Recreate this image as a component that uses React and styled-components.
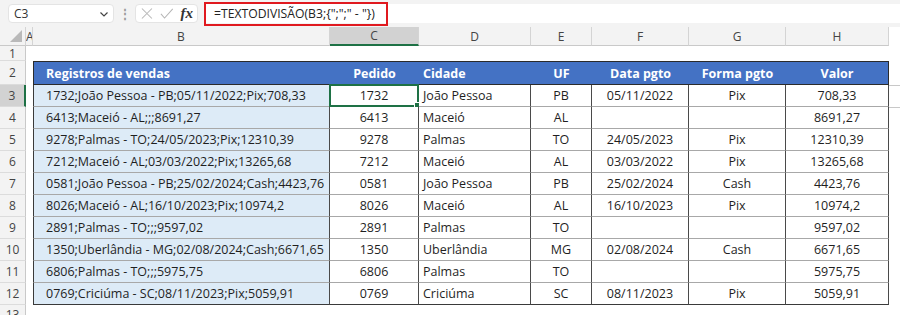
import React from 'react'
import styled, { createGlobalStyle } from 'styled-components'

const GlobalStyle = createGlobalStyle`
    body {
        margin: 0;
        background: #ffffff;
        font-family: 'Open Sans', 'Noto Sans', sans-serif;
    }
`

const COLS = '26px 7px 297px 89px 112px 61px 97px 97px 103px 1fr'

const Page = styled.div`
    width: 900px;
    height: 315px;
    overflow: hidden;
    background: #ffffff;
`

const Toolbar = styled.div`
    display: flex;
    align-items: center;
    height: 27px;
    background: #f3f3f3;
    padding-left: 8px;
`

const NameBox = styled.div`
    display: flex;
    align-items: center;
    justify-content: space-between;
    width: 106px;
    height: 19px;
    box-sizing: border-box;
    padding: 0 4px 0 5px;
    background: #ffffff;
    border: 1px solid #e4e4e4;
    border-radius: 4px;
    font-size: 12px;
    color: #333;
`

const Dots = styled.div`
    width: 21px;
    text-align: center;
    color: #9a9a9a;
    font-size: 12px;
    font-weight: 700;
`

const FnBox = styled.div`
    display: flex;
    align-items: center;
    gap: 7px;
    width: 63px;
    height: 19px;
    box-sizing: border-box;
    padding: 0 4px 0 5px;
    background: #ffffff;
    border: 1px solid #e4e4e4;
    border-radius: 4px;
`

const Fx = styled.span`
    font-family: 'Liberation Serif', serif;
    font-style: italic;
    font-weight: 700;
    font-size: 15px;
    color: #333;
`

const FormulaBar = styled.div`
    flex: 1;
    display: flex;
    align-items: center;
    height: 19px;
    margin-left: 6px;
    background: #ffffff;
`

const Formula = styled.div`
    height: 24px;
    box-sizing: border-box;
    border: 2px solid #e0191f;
    padding: 0 11px 0 8px;
    display: flex;
    align-items: center;
    font-size: 12.2px;
    color: #222;
    white-space: nowrap;
`

const Sheet = styled.div`
    display: grid;
    grid-template-columns: ${COLS};
    grid-template-rows: 19px 15px 24px repeat(10, 22px) 20px;
`

const ColHead = styled.div`
    display: flex;
    align-items: center;
    justify-content: ${p => (p.$left ? 'flex-start' : 'center')};
    background: ${p => (p.$active ? '#d2d2d2' : '#f3f3f3')};
    border-bottom: ${p => (p.$active ? '2px solid #1e7145' : '1px solid #c9c9c9')};
    border-right: 1px solid #d4d4d4;
    box-sizing: border-box;
    font-size: 12px;
    color: #444;
    overflow: hidden;
`

const Corner = styled.div`
    display: flex;
    align-items: flex-end;
    justify-content: flex-end;
    padding: 0 3px 3px 0;
    background: #f3f3f3;
    border-bottom: 1px solid #c9c9c9;
    border-right: 1px solid #d4d4d4;
    box-sizing: border-box;
`

const RowHead = styled.div`
    display: flex;
    align-items: center;
    justify-content: center;
    background: ${p => (p.$active ? '#d2d2d2' : '#f3f3f3')};
    border-right: ${p => (p.$active ? '2px solid #1e7145' : '1px solid #c9c9c9')};
    border-bottom: 1px solid #dcdcdc;
    box-sizing: border-box;
    font-size: 12px;
    color: #444;
`

const Blank = styled.div`
    box-sizing: border-box;
    border-top: ${p => (p.$line ? '1px solid #c8c8c8' : 'none')};
`

const HeadCell = styled.div`
    display: flex;
    align-items: center;
    justify-content: ${p => (p.$align === 'left' ? 'flex-start' : 'center')};
    padding-left: ${p => p.$pad || 0}px;
    background: #4472c4;
    color: #ffffff;
    font-weight: 700;
    font-size: 12.5px;
    border-top: 1px solid #2b2b2b;
    border-left: ${p => (p.$first ? '1px solid #2b2b2b' : 'none')};
    border-right: ${p => (p.$last ? '1px solid #2b2b2b' : 'none')};
    border-bottom: 1px solid #2b2b2b;
    box-sizing: border-box;
    white-space: nowrap;
`

const Cell = styled.div`
    position: relative;
    display: flex;
    align-items: center;
    justify-content: ${p => (p.$align === 'left' ? 'flex-start' : 'center')};
    padding-left: ${p => p.$pad || 0}px;
    background: ${p => (p.$fill ? '#ddebf7' : '#ffffff')};
    border-left: ${p => (p.$first ? '1px solid #3a3a3a' : 'none')};
    border-right: 1px solid #4a4a4a;
    border-bottom: 1px solid ${p => (p.$end ? '#3a3a3a' : '#a8a8a8')};
    box-sizing: border-box;
    font-size: 12.5px;
    color: #1f1f1f;
    white-space: nowrap;
`

const Selection = styled.div`
    position: absolute;
    inset: -1px -1px -1px -1px;
    border: 2px solid #1e7145;
    pointer-events: none;
`

const Handle = styled.div`
    position: absolute;
    right: -4px;
    bottom: -4px;
    width: 5px;
    height: 5px;
    background: #1e7145;
    border: 1px solid #ffffff;
`

const columns = ['A', 'B', 'C', 'D', 'E', 'F', 'G', 'H']

const headers = [
    { text: 'Registros de vendas', align: 'left', pad: 12 },
    { text: 'Pedido' },
    { text: 'Cidade', align: 'left', pad: 4 },
    { text: 'UF' },
    { text: 'Data pgto' },
    { text: 'Forma pgto' },
    { text: 'Valor' },
]

const rows = [
    ['1732;João Pessoa - PB;05/11/2022;Pix;708,33', '1732', 'João Pessoa', 'PB', '05/11/2022', 'Pix', '708,33'],
    ['6413;Maceió - AL;;;8691,27', '6413', 'Maceió', 'AL', '', '', '8691,27'],
    ['9278;Palmas - TO;24/05/2023;Pix;12310,39', '9278', 'Palmas', 'TO', '24/05/2023', 'Pix', '12310,39'],
    ['7212;Maceió - AL;03/03/2022;Pix;13265,68', '7212', 'Maceió', 'AL', '03/03/2022', 'Pix', '13265,68'],
    ['0581;João Pessoa - PB;25/02/2024;Cash;4423,76', '0581', 'João Pessoa', 'PB', '25/02/2024', 'Cash', '4423,76'],
    ['8026;Maceió - AL;16/10/2023;Pix;10974,2', '8026', 'Maceió', 'AL', '16/10/2023', 'Pix', '10974,2'],
    ['2891;Palmas - TO;;;9597,02', '2891', 'Palmas', 'TO', '', '', '9597,02'],
    ['1350;Uberlândia - MG;02/08/2024;Cash;6671,65', '1350', 'Uberlândia', 'MG', '02/08/2024', 'Cash', '6671,65'],
    ['6806;Palmas - TO;;;5975,75', '6806', 'Palmas', 'TO', '', '', '5975,75'],
    ['0769;Criciúma - SC;08/11/2023;Pix;5059,91', '0769', 'Criciúma', 'SC', '08/11/2023', 'Pix', '5059,91'],
]

const Chevron = () => (
    <svg width="10" height="10" viewBox="0 0 10 10">
        <path d="M1.5 3.5 L5 7 L8.5 3.5" fill="none" stroke="#444" strokeWidth="1.2" />
    </svg>
)

const Cross = () => (
    <svg width="13" height="13" viewBox="0 0 13 13">
        <path d="M1 1 L12 12 M12 1 L1 12" stroke="#b5b5b5" strokeWidth="1.1" />
    </svg>
)

const Check = () => (
    <svg width="15" height="13" viewBox="0 0 15 13">
        <path d="M1 7 L5 11.5 L14 1.5" fill="none" stroke="#b5b5b5" strokeWidth="1.1" />
    </svg>
)

const Triangle = () => (
    <svg width="12" height="12" viewBox="0 0 12 12">
        <polygon points="12,0 12,12 0,12" fill="#b9b9b9" />
    </svg>
)

const App = () => {
    return (
        <Page>
            <GlobalStyle />
            <Toolbar>
                <NameBox>
                    C3
                    <Chevron />
                </NameBox>
                <Dots>⋮</Dots>
                <FnBox>
                    <Cross />
                    <Check />
                    <Fx>fx</Fx>
                </FnBox>
                <FormulaBar>
                    <Formula>=TEXTODIVISÃO(B3;{'{";";" - "}'})</Formula>
                </FormulaBar>
            </Toolbar>
            <Sheet>
                <Corner>
                    <Triangle />
                </Corner>
                {columns.map(c => (
                    <ColHead key={c} $active={c === 'C'} $left={c === 'A'}>
                        {c}
                    </ColHead>
                ))}
                <Blank />

                <RowHead>1</RowHead>
                {columns.map(c => (
                    <Blank key={c} />
                ))}
                <Blank />

                <RowHead>2</RowHead>
                <Blank />
                {headers.map((h, i) => (
                    <HeadCell
                        key={h.text}
                        $align={h.align}
                        $pad={h.pad}
                        $first={i === 0}
                        $last={i === headers.length - 1}
                    >
                        {h.text}
                    </HeadCell>
                ))}
                <Blank />

                {rows.map((r, ri) => {
                    const n = ri + 3
                    const end = ri === rows.length - 1
                    return (
                        <React.Fragment key={n}>
                            <RowHead $active={n === 3}>{n}</RowHead>
                            <Blank />
                            <Cell $fill $first $align="left" $pad={12} $end={end}>
                                {r[0]}
                            </Cell>
                            <Cell $end={end}>
                                {r[1]}
                                {n === 3 && (
                                    <Selection>
                                        <Handle />
                                    </Selection>
                                )}
                            </Cell>
                            <Cell $align="left" $pad={4} $end={end}>
                                {r[2]}
                            </Cell>
                            <Cell $end={end}>{r[3]}</Cell>
                            <Cell $end={end}>{r[4]}</Cell>
                            <Cell $end={end}>{r[5]}</Cell>
                            <Cell $end={end}>{r[6]}</Cell>
                            <Blank $line={n === 3 || n === 4} />
                        </React.Fragment>
                    )
                })}

                <RowHead>13</RowHead>
            </Sheet>
        </Page>
    )
}

export default App
